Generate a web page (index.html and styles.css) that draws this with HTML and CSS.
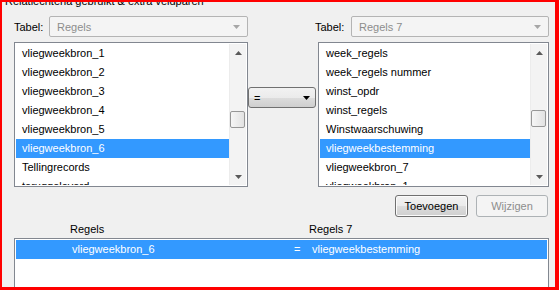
FILE: index.html
```html
<!DOCTYPE html>
<html>
<head>
<meta charset="utf-8">
<link rel="stylesheet" href="styles.css">
</head>
<body>
<div class="frame">
  <span class="caption">Relatiecriteria gebruikt &amp; extra veldparen</span>
  <div class="content">
    <div class="top-row">
      <div class="tab tab-left">
        <span class="label">Tabel:</span>
        <div class="combo disabled w199"><span>Regels</span><svg class="dd" width="7" height="4" viewBox="0 0 7 4"><polygon points="0,0 7,0 3.5,4" fill="#a6a6a6"/></svg></div>
      </div>
      <div class="tab tab-right">
        <span class="label">Tabel:</span>
        <div class="combo disabled w198"><span>Regels 7</span><svg class="dd" width="7" height="4" viewBox="0 0 7 4"><polygon points="0,0 7,0 3.5,4" fill="#a6a6a6"/></svg></div>
      </div>
    </div>

    <div class="mid-row">
      <div class="list list-left">
        <div class="items">
          <div class="item">vliegweekbron_1</div>
          <div class="item">vliegweekbron_2</div>
          <div class="item">vliegweekbron_3</div>
          <div class="item">vliegweekbron_4</div>
          <div class="item">vliegweekbron_5</div>
          <div class="item sel">vliegweekbron_6</div>
          <div class="item">Tellingrecords</div>
          <div class="item">teruggeleverd</div>
        </div>
        <div class="scroll">
          <div class="sarrow"><svg width="7" height="4" viewBox="0 0 7 4"><polygon points="3.5,0 7,4 0,4" fill="#5a5a5a"/></svg></div>
          <div class="track"><div class="thumb t-left"></div></div>
          <div class="sarrow"><svg width="7" height="4" viewBox="0 0 7 4"><polygon points="0,0 7,0 3.5,4" fill="#5a5a5a"/></svg></div>
        </div>
      </div>
      <div class="mid">
        <div class="eq"><span>=</span><svg width="7" height="4" viewBox="0 0 7 4"><polygon points="0,0 7,0 3.5,4" fill="#000"/></svg></div>
      </div>
      <div class="list list-right">
        <div class="items">
          <div class="item">week_regels</div>
          <div class="item">week_regels nummer</div>
          <div class="item">winst_opdr</div>
          <div class="item">winst_regels</div>
          <div class="item">Winstwaarschuwing</div>
          <div class="item sel">vliegweekbestemming</div>
          <div class="item">vliegweekbron_7</div>
          <div class="item">vliegweekbron_1</div>
        </div>
        <div class="scroll">
          <div class="sarrow"><svg width="7" height="4" viewBox="0 0 7 4"><polygon points="3.5,0 7,4 0,4" fill="#5a5a5a"/></svg></div>
          <div class="track"><div class="thumb t-right"></div></div>
          <div class="sarrow"><svg width="7" height="4" viewBox="0 0 7 4"><polygon points="0,0 7,0 3.5,4" fill="#5a5a5a"/></svg></div>
        </div>
      </div>
    </div>

    <div class="btn-row">
      <button class="btn default">Toevoegen</button>
      <button class="btn disabled-btn">Wijzigen</button>
    </div>

    <div class="head-row">
      <span class="h1">Regels</span>
      <span class="h2">Regels 7</span>
    </div>

    <div class="view">
      <div class="vrow sel">
        <span class="c1">vliegweekbron_6</span>
        <span class="c2">=</span>
        <span class="c3">vliegweekbestemming</span>
      </div>
    </div>
  </div>
</div>
</body>
</html>
```

FILE: styles.css
```css
html, body {
  margin: 0;
  padding: 0;
  background: #f0f0f0;
}

body {
  font-family: "Liberation Sans", Arial, sans-serif;
  font-size: 11px;
  color: #000;
}

.frame {
  position: relative;
  width: 559px;
  height: 290px;
  box-sizing: border-box;
  border-style: solid;
  border-color: #ff0000;
  border-width: 2px 4px 3px 2px;
  padding: 14px 0 0 12px;
  overflow: hidden;
  background: #f0f0f0;
}

.caption {
  position: absolute;
  top: -7px;
  left: 1px;
  width: 247px;
  padding-left: 2px;
  line-height: 13px;
  background: #f0f0f0;
  white-space: nowrap;
}

.content {
  width: 535px;
}

.top-row {
  display: flex;
  height: 21px;
  align-items: center;
}

.tab {
  display: flex;
  width: 234px;
  justify-content: space-between;
  align-items: center;
}

.tab-right {
  margin-left: 67px;
}

.combo {
  box-sizing: border-box;
  height: 21px;
  display: flex;
  align-items: center;
  justify-content: space-between;
  padding: 0 7px 0 7px;
  border: 1px solid #b4b4b4;
  border-radius: 2px;
  background: #f4f4f4;
}

.combo.disabled {
  color: #8d8d8d;
}

.w199 { width: 199px; }
.w198 { width: 198px; }

.mid-row {
  display: flex;
  margin-top: 5px;
}

.list {
  box-sizing: border-box;
  height: 145px;
  border: 1px solid #828790;
  background: #fff;
  padding: 1px;
  display: flex;
  overflow: hidden;
}

.list-left { width: 234px; }
.list-right { width: 231px; }

.items {
  flex: 1;
  overflow: hidden;
}

.item {
  height: 19px;
  line-height: 19px;
  padding-left: 6px;
  white-space: nowrap;
}

.item.sel, .vrow.sel {
  background: #3399ff;
  color: #fff;
}

.scroll {
  width: 17px;
  display: flex;
  flex-direction: column;
  background: #f3f3f3;
  border-left: 1px solid #ececec;
  box-sizing: border-box;
}

.sarrow {
  height: 17px;
  display: flex;
  align-items: center;
  justify-content: center;
}

.track {
  flex: 1;
}

.thumb {
  box-sizing: border-box;
  width: 15px;
  height: 17px;
  border: 1px solid #979797;
  border-radius: 2px;
  background: linear-gradient(to right, #f6f6f6, #e2e2e2);
}

.t-left { margin-top: 50px; }
.t-right { margin-top: 49px; }

.mid {
  width: 70px;
}

.eq {
  box-sizing: border-box;
  width: 68px;
  height: 21px;
  margin-top: 45px;
  border: 1px solid #707070;
  border-radius: 3px;
  background: linear-gradient(to bottom, #f2f2f2 0%, #ebebeb 50%, #dddddd 51%, #cfcfcf 100%);
  display: flex;
  align-items: center;
  justify-content: space-between;
  padding: 0 5px 0 5px;
}

.btn-row {
  display: flex;
  justify-content: flex-end;
  gap: 8px;
  margin-top: 8px;
  padding-right: 1px;
}

.btn {
  box-sizing: border-box;
  height: 22px;
  font-family: "Liberation Sans", Arial, sans-serif;
  font-size: 11px;
  border-radius: 3px;
  padding: 0;
}

.btn.default {
  width: 73px;
  color: #000;
  border: 1px solid #707070;
  background: linear-gradient(to bottom, #f2f2f2 0%, #ebebeb 50%, #dddddd 51%, #cfcfcf 100%);
  box-shadow: inset 0 0 0 1px #fbfbfb;
}

.btn.disabled-btn {
  width: 72px;
  color: #8d8d8d;
  border: 1px solid #adb2b5;
  background: #f4f4f4;
}

.head-row {
  display: flex;
  height: 15px;
  margin-top: 6px;
  line-height: 13px;
}

.h1 {
  margin-left: 56px;
  width: 239px;
}

.view {
  box-sizing: border-box;
  height: 60px;
  border: 1px solid #828790;
  background: #fff;
  padding: 1px;
}

.vrow {
  display: flex;
  height: 19px;
  line-height: 19px;
  white-space: nowrap;
}

.c1 {
  padding-left: 56px;
  width: 222px;
}

.c2 {
  width: 18px;
}
```
